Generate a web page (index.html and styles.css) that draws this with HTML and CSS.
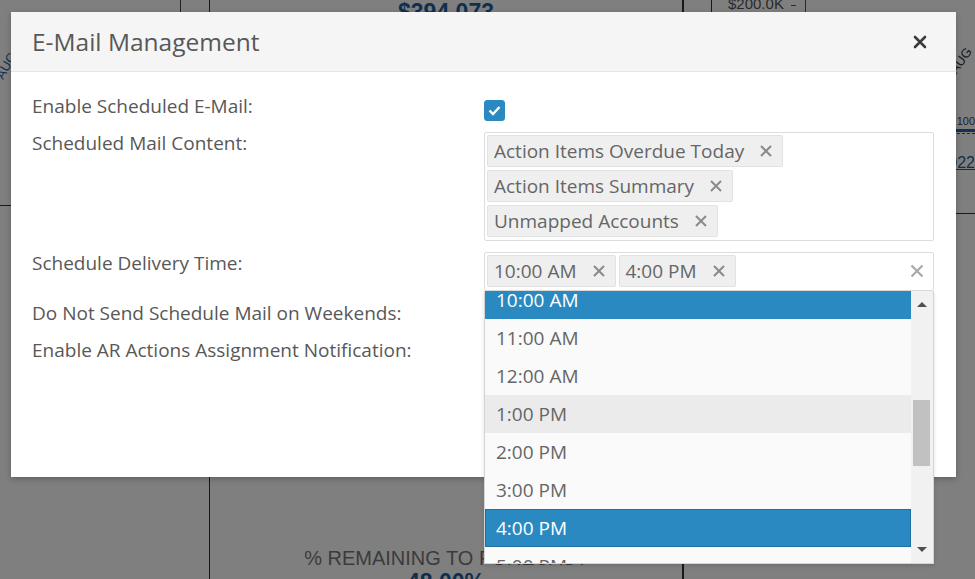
FILE: index.html
```html
<html><head><meta charset="UTF-8">
<meta name="viewport" content="width=device-width, initial-scale=1.0">
<title>E-Mail Management</title>
<link rel="stylesheet" href="styles.css">
</head>
<body>
    <div class="dashboard">
        <div class="panel panel-left">
            <div class="mini-chart">
                <span class="tick-label">AUG</span>
            </div>
        </div>
        <div class="panel panel-mid">
            <div class="kpi-value">$394,073</div>
            <div class="kpi-bottom">
                <div class="kpi-label">% REMAINING TO FORECAST</div>
                <div class="kpi-value">48.00%</div>
            </div>
        </div>
        <div class="panel panel-right">
            <div class="trend-card">
                <div class="trend-axis">
                    <span class="axis-label">$200.0K</span>
                    <span class="axis-tick"></span>
                </div>
                <div class="trend-plot">
                    <span class="date-label">22 AUG</span>
                    <span class="axis-small">100</span>
                    <span class="trend-line"></span>
                    <span class="trend-dash"></span>
                    <a class="trend-link" href="#">Year 2022</a>
                </div>
            </div>
        </div>
    </div>

    <div class="backdrop"></div>

    <div class="modal">
        <div class="modal-header">
            <h4 class="modal-title">E-Mail Management</h4>
            <button class="close" aria-label="Close">
                <svg width="14" height="14" viewBox="0 0 14 14"><path d="M2 2L12 12M12 2L2 12" stroke="currentColor" stroke-width="2.6" stroke-linecap="round"/></svg>
            </button>
        </div>
        <div class="modal-body">
            <div class="form-row">
                <label class="form-label">Enable Scheduled E-Mail:</label>
                <div class="form-control">
                    <span class="checkbox checked">
                        <svg width="13" height="11" viewBox="0 0 13 11"><path d="M1.5 5.5L5 9L11.5 2" fill="none" stroke="#fff" stroke-width="2.4"/></svg>
                    </span>
                </div>
            </div>
            <div class="form-row">
                <label class="form-label">Scheduled Mail Content:</label>
                <div class="form-control">
                    <div class="select-box">
                        <span class="tag">Action Items Overdue Today<svg class="remove" viewBox="0 0 14 14"><path d="M2 2L12 12M12 2L2 12"/></svg></span>
                        <span class="tag">Action Items Summary<svg class="remove" viewBox="0 0 14 14"><path d="M2 2L12 12M12 2L2 12"/></svg></span>
                        <span class="tag">Unmapped Accounts<svg class="remove" viewBox="0 0 14 14"><path d="M2 2L12 12M12 2L2 12"/></svg></span>
                    </div>
                </div>
            </div>
            <div class="form-row">
                <label class="form-label">Schedule Delivery Time:</label>
                <div class="form-control time-field">
                    <div class="select-box">
                        <span class="tag">10:00 AM<svg class="remove" viewBox="0 0 14 14"><path d="M2 2L12 12M12 2L2 12"/></svg></span>
                        <span class="tag">4:00 PM<svg class="remove" viewBox="0 0 14 14"><path d="M2 2L12 12M12 2L2 12"/></svg></span>
                        <svg class="clear-all" viewBox="0 0 14 14"><path d="M1.5 1.5L12.5 12.5M12.5 1.5L1.5 12.5"/></svg>
                    </div>
                    <div class="dropdown">
                        <div class="options-view">
                            <ul class="options">
                                <li class="option selected">10:00 AM</li>
                                <li class="option">11:00 AM</li>
                                <li class="option">12:00 AM</li>
                                <li class="option hover">1:00 PM</li>
                                <li class="option">2:00 PM</li>
                                <li class="option">3:00 PM</li>
                                <li class="option selected active">4:00 PM</li>
                                <li class="option">5:00 PM</li>
                            </ul>
                        </div>
                        <div class="scrollbar">
                            <span class="arrow up"></span>
                            <span class="thumb"></span>
                            <span class="arrow down"></span>
                        </div>
                    </div>
                </div>
            </div>
            <div class="form-row">
                <label class="form-label">Do Not Send Schedule Mail on Weekends:</label>
                <div class="form-control">
                    <span class="checkbox checked"></span>
                </div>
            </div>
            <div class="form-row">
                <label class="form-label">Enable AR Actions Assignment Notification:</label>
                <div class="form-control">
                    <span class="checkbox"></span>
                </div>
            </div>
        </div>
    </div>
</body>
</html>
```

FILE: styles.css
```css
:root {
    --primary-color: #2b89c1;
    --label-color: #585858;
    --tag-color: #666666;
    --border-color: #dcdcdc;
}

* {
    box-sizing: border-box;
}

body {
    margin: 0;
    width: 975px;
    height: 579px;
    overflow: hidden;
    position: relative;
    font-family: 'Open Sans', sans-serif;
    background-color: #ffffff;
}

/* dashboard behind the dialog */
.dashboard {
    display: flex;
    height: 579px;
    font-family: 'Liberation Sans', Arial, sans-serif;
}

.panel {
    height: 100%;
}

.panel-left {
    width: 210px;
    border-right: 1px solid #333333;
}

.mini-chart {
    width: 181px;
    height: 206px;
    border-right: 1px solid #444444;
    border-bottom: 1px solid #333333;
    padding: 58px 0 0 0;
}

.tick-label {
    display: inline-block;
    font-size: 13px;
    color: #2a64a8;
    transform: rotate(-60deg);
    margin-left: -8px;
}

.panel-mid {
    width: 474px;
    border-right: 2px solid #333333;
    display: flex;
    flex-direction: column;
    justify-content: space-between;
    align-items: center;
}

.kpi-value {
    font-size: 23px;
    font-weight: bold;
    color: #1f5f9f;
    line-height: 26px;
    margin-top: -1px;
}

.kpi-bottom {
    text-align: center;
    margin-bottom: -16px;
}

.kpi-label {
    font-size: 20px;
    color: #777777;
    line-height: 24px;
}

.panel-right {
    flex: 1;
    padding-left: 27px;
}

.trend-card {
    display: flex;
    height: 214px;
    border-left: 1px solid #333333;
    border-bottom: 1px solid #333333;
}

.trend-axis {
    width: 94px;
    display: flex;
    align-items: flex-start;
    padding: 0 0 0 16px;
    border-right: 1px solid #555555;
}

.axis-label {
    font-size: 15px;
    color: #555555;
    line-height: 15px;
    margin-top: -4px;
}

.axis-tick {
    width: 5px;
    border-top: 1px solid #555555;
    margin: 5px 0 0 7px;
}

.trend-plot {
    flex: 1;
    display: flex;
    flex-direction: column;
    align-items: flex-end;
    padding-top: 60px;
    font-size: 13px;
}

.date-label {
    color: #333333;
    transform: rotate(-55deg);
    margin-right: -4px;
}

.axis-small {
    margin-top: 40px;
    color: #444444;
    font-size: 11px;
}

.trend-line {
    width: 100%;
    border-top: 3px solid #2a64a8;
    margin-top: 2px;
}

.trend-dash {
    width: 100%;
    border-top: 1px dashed #555555;
    margin-top: 1px;
}

.trend-link {
    margin-top: 20px;
    color: #1f5f9f;
    font-size: 16px;
}

.backdrop {
    position: absolute;
    top: 0;
    left: 0;
    right: 0;
    bottom: 0;
    background-color: rgba(0, 0, 0, 0.5);
}

/* dialog */
.modal {
    position: absolute;
    left: 11px;
    top: 12px;
    width: 945px;
    height: 465px;
    background-color: #ffffff;
    box-shadow: 0 2px 6px rgba(0, 0, 0, 0.25);
}

.modal-header {
    height: 60px;
    background-color: #f5f5f5;
    border-bottom: 1px solid #e6e6e6;
    display: flex;
    align-items: center;
    justify-content: space-between;
    padding: 0 29px 0 21px;
}

.modal-title {
    margin: 0;
    font-size: 24.5px;
    font-weight: 400;
    color: var(--label-color);
}

.close {
    border: none;
    background: none;
    padding: 0;
    color: #3a3a3a;
    display: flex;
    cursor: pointer;
}

.modal-body {
    padding: 21px 22px 0 21px;
}

.form-row {
    display: flex;
    margin-bottom: 9px;
}

.form-label {
    width: 452px;
    font-size: 19px;
    line-height: 27px;
    color: var(--label-color);
}

.form-control {
    width: 450px;
}

.checkbox {
    width: 21px;
    height: 21px;
    margin-top: 7px;
    border: 1px solid #b5b5b5;
    border-radius: 3px;
    background-color: #ffffff;
    display: flex;
    align-items: center;
    justify-content: center;
}

.checkbox.checked {
    border-color: var(--primary-color);
    background-color: var(--primary-color);
}

.select-box {
    margin-top: 2px;
    border: 1px solid var(--border-color);
    border-radius: 2px;
    background-color: #ffffff;
    padding: 2px 9px 3px 2px;
    display: flex;
    flex-wrap: wrap;
    align-items: center;
    gap: 3px;
}

.tag {
    display: inline-flex;
    align-items: center;
    height: 32px;
    padding: 0 9px 0 6px;
    border: 1px solid #e2e2e2;
    border-radius: 2px;
    background-color: #efefef;
    font-size: 19px;
    color: var(--tag-color);
}

.remove {
    width: 14px;
    height: 14px;
    margin-left: 15px;
    stroke: #8a8a8a;
    stroke-width: 2;
}

.clear-all {
    width: 14px;
    height: 14px;
    margin-left: auto;
    stroke: #a8a8a8;
    stroke-width: 2.2;
}

.time-field {
    position: relative;
}

.dropdown {
    position: absolute;
    top: 100%;
    left: 0;
    right: 0;
    height: 273px;
    display: flex;
    background-color: #fafafa;
    border: 1px solid #d4d4d4;
    border-top: none;
    box-shadow: 0 2px 4px rgba(0, 0, 0, 0.12);
}

.options-view {
    flex: 1;
    overflow: hidden;
}

.options {
    list-style: none;
    margin: -10px 0 0 0;
    padding: 0;
}

.option {
    height: 38px;
    line-height: 38px;
    padding-left: 11px;
    font-size: 19px;
    color: var(--tag-color);
}

.option.hover {
    background-color: #ebebeb;
}

.option.selected {
    background-color: var(--primary-color);
    color: #ffffff;
}

.option.active {
    box-shadow: inset 0 0 0 1px #1f6fa3;
}

.scrollbar {
    width: 22px;
    background-color: #f1f1f1;
    display: flex;
    flex-direction: column;
    align-items: center;
    padding: 0 1px 0 0;
}

.arrow {
    width: 0;
    height: 0;
    border-left: 5px solid transparent;
    border-right: 5px solid transparent;
}

.arrow.up {
    margin-top: 11px;
    border-bottom: 5px solid #505050;
}

.arrow.down {
    margin-top: auto;
    margin-bottom: 11px;
    border-top: 5px solid #505050;
}

.thumb {
    width: 17px;
    height: 66px;
    margin-top: 93px;
    background-color: #c1c1c1;
}
```
